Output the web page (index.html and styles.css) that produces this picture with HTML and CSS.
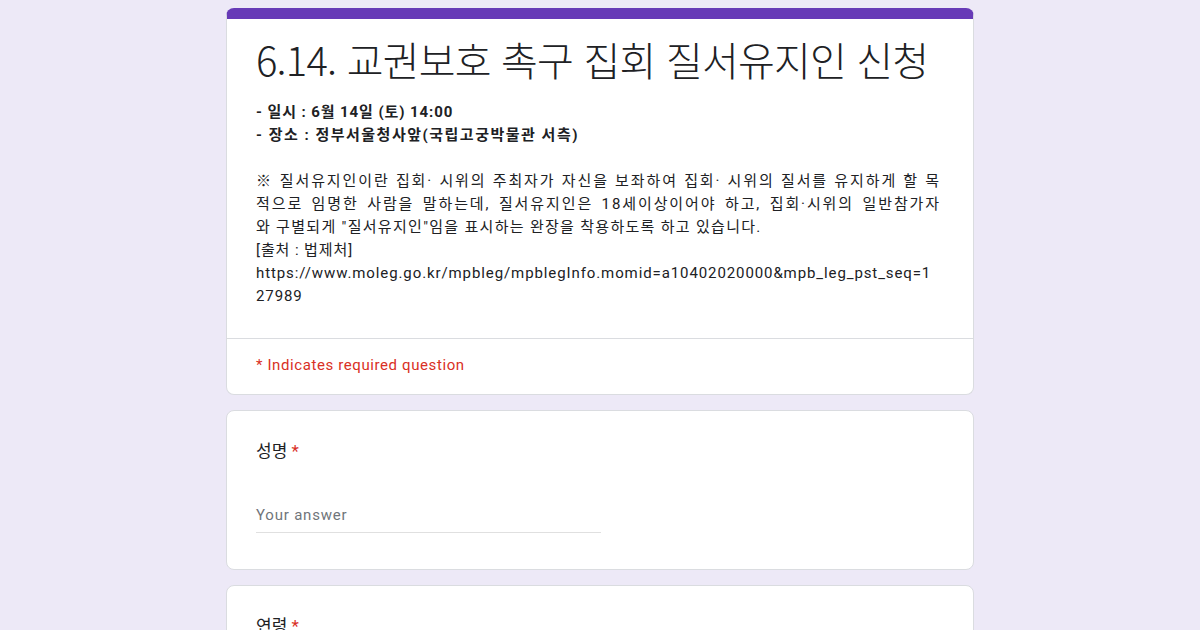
FILE: index.html
```html
<!DOCTYPE html>
<html lang="ko">
<head>
  <meta charset="utf-8">
  <title>6.14. 교권보호 촉구 집회 질서유지인 신청</title>
  <link rel="stylesheet" href="styles.css">
</head>
<body>
  <div class="form">
    <div class="card header-card">
      <div class="header-body">
        <h1>6.14. 교권보호 촉구 집회 질서유지인 신청</h1>
        <div class="desc">
          <b>- 일시 : 6월 14일 (토) 14:00</b><br>
          <b class="wide">- 장소 : 정부서울청사앞(국립고궁박물관 서측)</b><br>
          <br>
          <span class="full">※ 질서유지인이란 집회· 시위의 주최자가 자신을 보좌하여 집회· 시위의 질서를 유지하게 할 목</span>
          <span class="full">적으로 임명한 사람을 말하는데, 질서유지인은 18세이상이어야 하고, 집회·시위의 일반참가자</span>
          <span class="last">와 구별되게 "질서유지인"임을 표시하는 완장을 착용하도록 하고 있습니다.</span><br>
          [출처 : 법제처]<br>
          <span class="url">https://www.moleg.go.kr/mpbleg/mpblegInfo.momid=a10402020000&amp;mpb_leg_pst_seq=1<br>27989</span>
        </div>
      </div>
      <div class="required-note">* Indicates required question</div>
    </div>

    <div class="card question">
      <div class="q-title">성명 <span class="star">*</span></div>
      <div class="answer">Your answer</div>
    </div>

    <div class="card question">
      <div class="q-title">연령 <span class="star">*</span></div>
      <div class="answer">Your answer</div>
    </div>
  </div>
</body>
</html>
```

FILE: styles.css
```css
body {
  margin: 0;
  padding: 0;
  background-color: #ede9f7;
  font-family: Roboto, "Noto Sans CJK KR", sans-serif;
  color: #202124;
}

.form {
  width: 748px;
  margin: 8px auto 0;
  display: flex;
  flex-direction: column;
  gap: 15px;
}

.card {
  background-color: #fff;
  border: 1px solid #dadce0;
  border-radius: 8px;
  box-sizing: border-box;
}

.header-card {
  border-top: 11px solid #673ab7;
}

.header-body {
  padding: 14px 20px 30px 29px;
  border-bottom: 1px solid #dadce0;
}

h1 {
  margin: 0 0 16px;
  font-family: "Noto Sans CJK KR", sans-serif;
  font-weight: 300;
  font-size: 40px;
  line-height: 52px;
  letter-spacing: -0.8px;
  white-space: nowrap;
}

.desc {
  width: 685px;
  font-size: 15px;
  line-height: 23px;
  letter-spacing: 0.9px;
  white-space: nowrap;
}

.desc b {
  font-weight: 700;
  letter-spacing: 0.9px;
}

.desc b.wide {
  letter-spacing: 1.5px;
}

.full {
  display: block;
  letter-spacing: 1.9px;
  text-align: justify;
  text-align-last: justify;
}

.last {
  letter-spacing: 1.3px;
}

.url {
  letter-spacing: 0.9px;
}

.required-note {
  padding: 14px 29px 17px;
  color: #d93025;
  font-size: 15px;
  line-height: 24px;
  letter-spacing: 0.6px;
}

.question {
  padding: 28px 29px 36px;
}

.q-title {
  font-size: 17px;
  line-height: 24px;
}

.star {
  color: #d93025;
}

.answer {
  width: 345px;
  margin-top: 40px;
  padding-bottom: 5px;
  border-bottom: 1px solid #e0e0e0;
  color: #70757a;
  font-size: 15px;
  line-height: 24px;
  letter-spacing: 0.8px;
}
```
